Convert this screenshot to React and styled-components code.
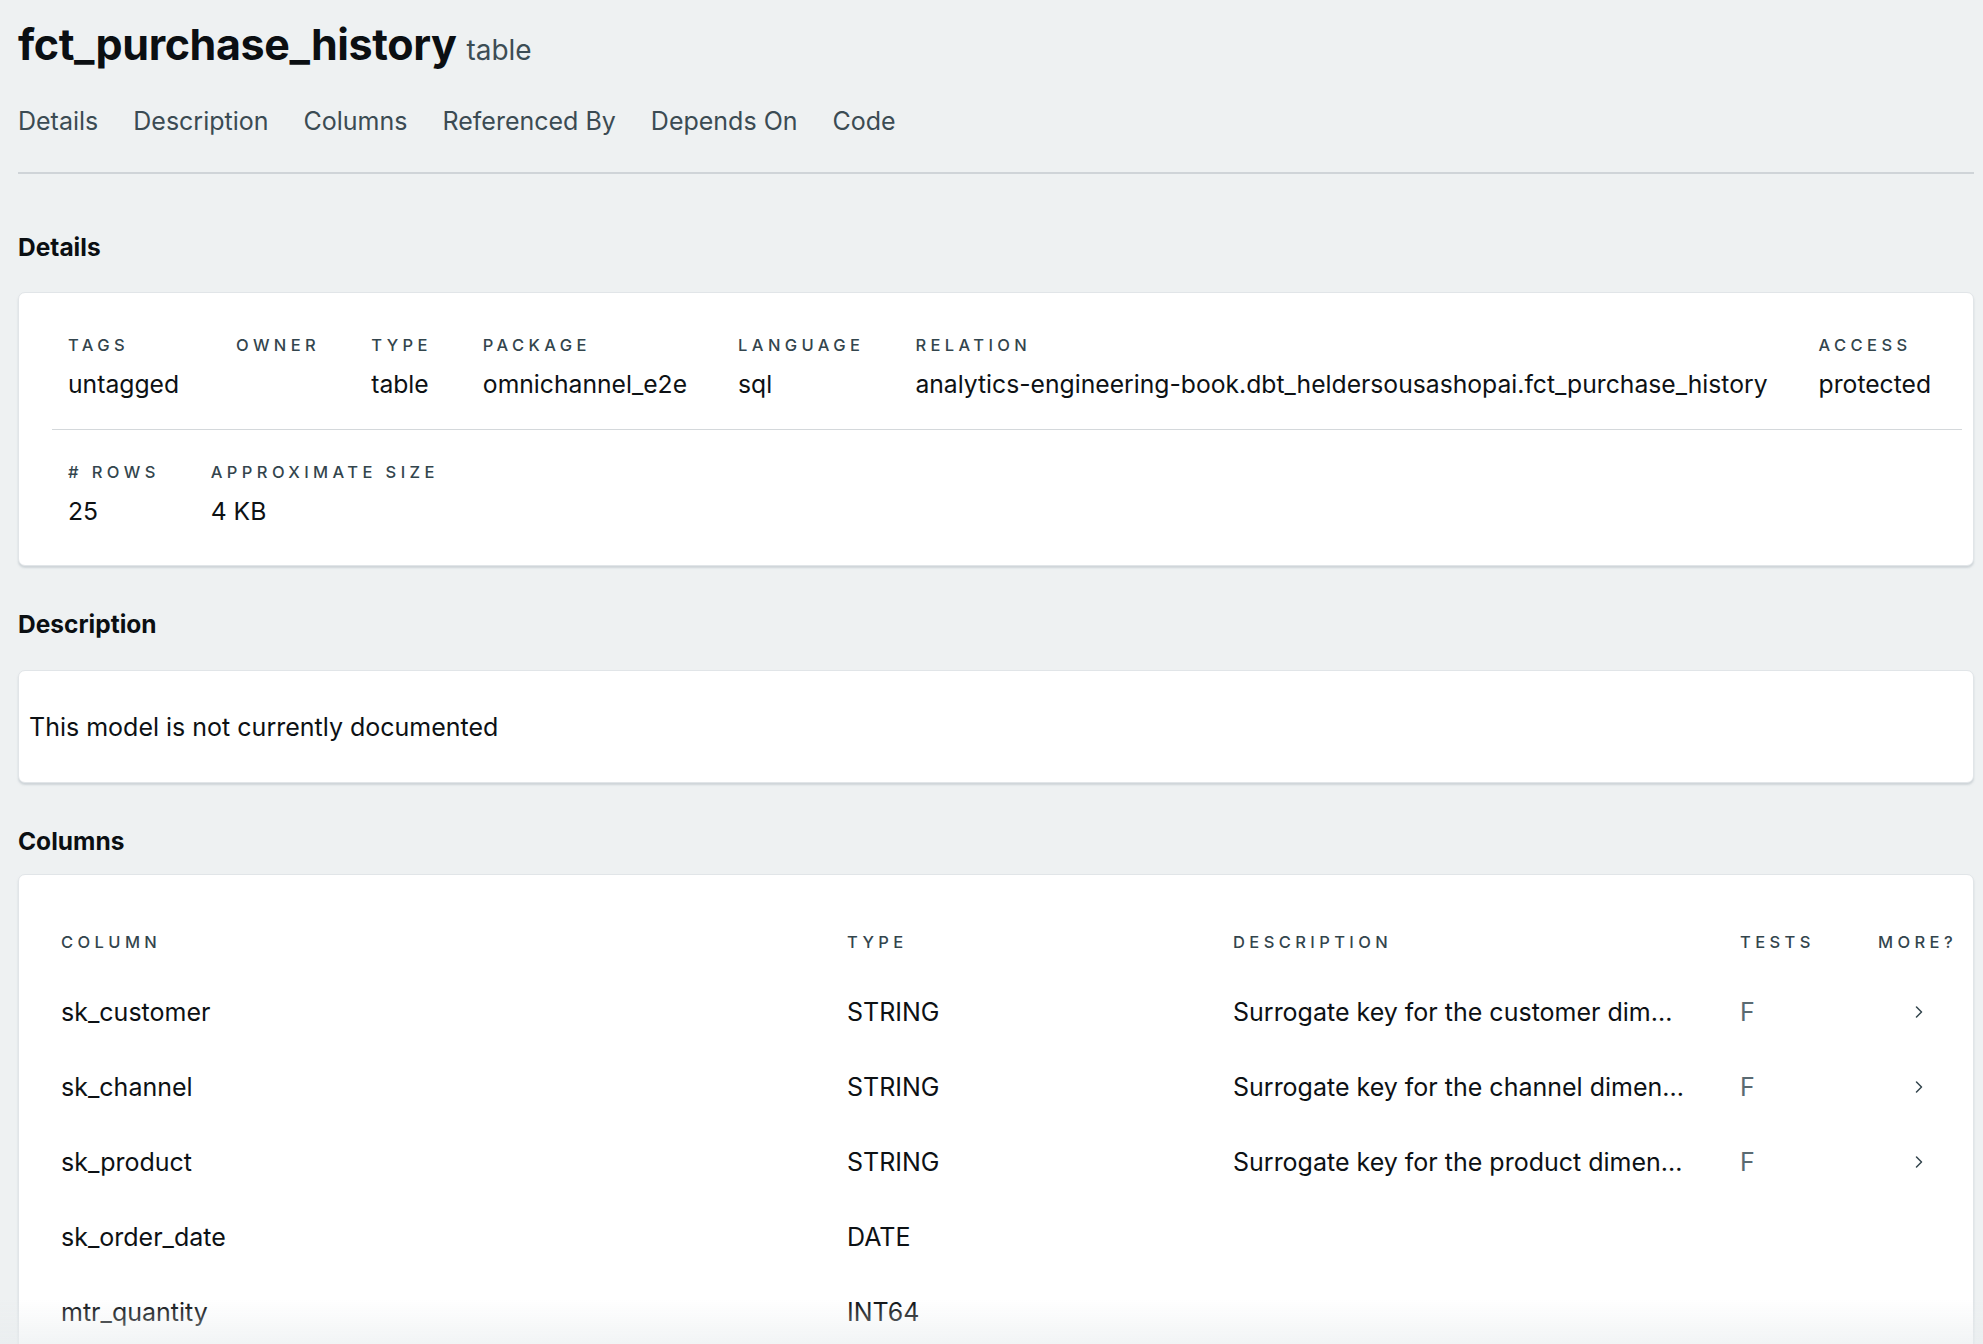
import React from 'react';
import styled, { createGlobalStyle } from 'styled-components';
import { ChevronRight } from 'lucide-react';

const GlobalStyle = createGlobalStyle`
  html, body {
    margin: 0;
    padding: 0;
    background: #eef1f2;
    font-family: Inter, 'Noto Sans', 'Liberation Sans', sans-serif;
    color: #0d1114;
    -webkit-font-smoothing: antialiased;
  }
`;

const Page = styled.div`
  padding: 18px 9px 0 18px;
  height: 1344px;
  box-sizing: border-box;
  overflow: hidden;
`;

const TitleRow = styled.div`
  display: flex;
  align-items: baseline;
  gap: 10px;
`;

const Title = styled.h1`
  margin: 0;
  font-size: 43px;
  font-weight: 700;
  letter-spacing: -0.4px;
  line-height: 52px;
  color: #0b0f12;
`;

const Kind = styled.span`
  font-size: 28px;
  color: #3c4d55;
  font-weight: 400;
`;

const Tabs = styled.nav`
  display: flex;
  gap: 35px;
  padding: 35px 0 35px;
  border-bottom: 2px solid #cfd4d8;
`;

const Tab = styled.a`
  font-size: 25px;
  line-height: 32px;
  color: #3b4b53;
  cursor: pointer;
`;

const SectionTitle = styled.h2`
  margin: ${(p) => p.$top}px 0 ${(p) => p.$bottom}px;
  font-size: 24.5px;
  font-weight: 700;
  line-height: 30px;
  color: #0b0f12;
`;

const Card = styled.section`
  background: #fff;
  border: 1px solid #e1e5e8;
  border-radius: 7px;
  box-shadow: 0 2px 2px rgba(150, 160, 168, 0.35);
  padding: ${(p) => p.$pad};
`;

const DetailRow = styled.div`
  display: flex;
  gap: 51px;
  padding: 0 16px;
`;

const Divider = styled.div`
  border-top: 1px solid #d4d8db;
  margin: ${(p) => p.$m};
`;

const Detail = styled.div`
  display: flex;
  flex-direction: column;
  gap: 12px;
  min-width: ${(p) => p.$min || 0}px;
`;

const Label = styled.div`
  font-size: 16.5px;
  font-weight: 500;
  letter-spacing: 4.4px;
  text-transform: uppercase;
  color: #33454d;
  line-height: 22px;
  white-space: nowrap;
`;

const Value = styled.div`
  font-size: 24.7px;
  line-height: 32px;
  color: #0d1114;
  white-space: nowrap;
  min-height: 32px;
`;

const Paragraph = styled.p`
  margin: 0;
  font-size: 25px;
  line-height: 32px;
  color: #0d1114;
`;

const Grid = styled.div`
  display: grid;
  grid-template-columns: 786px 386px 507px 138px 1fr;
  align-items: center;
`;

const HeadCell = styled(Label)`
  height: 64px;
  display: flex;
  align-items: center;
`;

const Cell = styled.div`
  height: 75px;
  display: flex;
  align-items: center;
  font-size: 25px;
  color: ${(p) => (p.$muted ? '#5a6a72' : '#0d1114')};
  white-space: nowrap;
  overflow: hidden;
`;

const More = styled(Cell)`
  padding-left: 31px;
  color: #33454d;
`;

const Fade = styled.div`
  position: fixed;
  left: 0;
  right: 0;
  bottom: 0;
  height: 44px;
  pointer-events: none;
  background: linear-gradient(rgba(239, 242, 243, 0), rgba(232, 236, 238, 0.6));
`;

const details = [
  { label: 'Tags', value: 'untagged', min: 117 },
  { label: 'Owner', value: '' },
  { label: 'Type', value: 'table' },
  { label: 'Package', value: 'omnichannel_e2e' },
  { label: 'Language', value: 'sql' },
  { label: 'Relation', value: 'analytics-engineering-book.dbt_heldersousashopai.fct_purchase_history' },
  { label: 'Access', value: 'protected' },
];

const stats = [
  { label: '# Rows', value: '25' },
  { label: 'Approximate Size', value: '4 KB' },
];

const columns = [
  { name: 'sk_customer', type: 'STRING', desc: 'Surrogate key for the customer dim...', tests: 'F' },
  { name: 'sk_channel', type: 'STRING', desc: 'Surrogate key for the channel dimen...', tests: 'F' },
  { name: 'sk_product', type: 'STRING', desc: 'Surrogate key for the product dimen...', tests: 'F' },
  { name: 'sk_order_date', type: 'DATE', desc: '', tests: '' },
  { name: 'mtr_quantity', type: 'INT64', desc: '', tests: '' },
];

export default function App() {
  return (
    <Page>
      <GlobalStyle />
      <TitleRow>
        <Title>fct_purchase_history</Title>
        <Kind>table</Kind>
      </TitleRow>
      <Tabs>
        {['Details', 'Description', 'Columns', 'Referenced By', 'Depends On', 'Code'].map((t) => (
          <Tab key={t}>{t}</Tab>
        ))}
      </Tabs>

      <SectionTitle $top={58} $bottom={30}>Details</SectionTitle>
      <Card $pad="41px 11px 38px 33px">
        <DetailRow>
          {details.map((d) => (
            <Detail key={d.label} $min={d.min}>
              <Label>{d.label}</Label>
              <Value>{d.value}</Value>
            </Detail>
          ))}
        </DetailRow>
        <Divider $m="29px 0 31px" />
        <DetailRow>
          {stats.map((d) => (
            <Detail key={d.label}>
              <Label>{d.label}</Label>
              <Value>{d.value}</Value>
            </Detail>
          ))}
        </DetailRow>
      </Card>

      <SectionTitle $top={43} $bottom={31}>Description</SectionTitle>
      <Card $pad="40px 10px 39px 10px">
        <Paragraph>This model is not currently documented</Paragraph>
      </Card>

      <SectionTitle $top={43} $bottom={18}>Columns</SectionTitle>
      <Card $pad="35px 0 20px 42px">
        <Grid>
          <HeadCell>Column</HeadCell>
          <HeadCell>Type</HeadCell>
          <HeadCell>Description</HeadCell>
          <HeadCell>Tests</HeadCell>
          <HeadCell>More?</HeadCell>
          {columns.map((c) => (
            <React.Fragment key={c.name}>
              <Cell>{c.name}</Cell>
              <Cell>{c.type}</Cell>
              <Cell>{c.desc}</Cell>
              <Cell $muted>{c.tests}</Cell>
              <More>{c.desc && <ChevronRight size={20} strokeWidth={1.8} />}</More>
            </React.Fragment>
          ))}
        </Grid>
      </Card>
      <Fade />
    </Page>
  );
}
